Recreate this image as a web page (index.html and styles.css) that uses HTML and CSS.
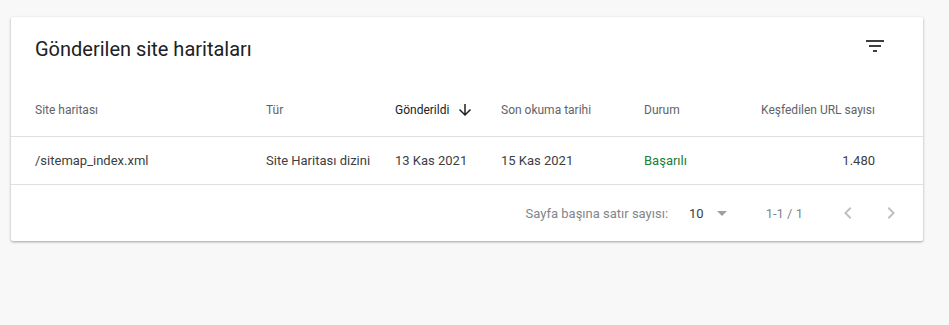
FILE: index.html
```html
<!DOCTYPE html>
<html lang="tr">
  <head>
    <meta charset="UTF-8" />
    <meta name="viewport" content="width=device-width, initial-scale=1.0" />
    <title>Site haritaları</title>
    <link rel="stylesheet" href="styles.css">
  </head>
  <body>
    <div id="card">
      <div class="card-head">
        <h2>Gönderilen site haritaları</h2>
        <button class="icon-btn" title="Filtrele">
          <svg width="24" height="24" viewBox="0 0 24 24"><path d="M3 6h18v2H3zM6 11h12v2H6zM10 16h4v2h-4z" fill="#3c4043"/></svg>
        </button>
      </div>

      <div class="row head-row">
        <span>Site haritası</span>
        <span>Tür</span>
        <span class="sorted">Gönderildi
          <svg width="18" height="18" viewBox="0 0 24 24"><path d="M20 12l-1.41-1.41L13 16.17V4h-2v12.17l-5.58-5.59L4 12l8 8 8-8z" fill="#202124"/></svg>
        </span>
        <span>Son okuma tarihi</span>
        <span>Durum</span>
        <span class="num">Keşfedilen URL sayısı</span>
      </div>

      <div class="row body-row">
        <span>/sitemap_index.xml</span>
        <span>Site Haritası dizini</span>
        <span>13 Kas 2021</span>
        <span>15 Kas 2021</span>
        <span class="ok">Başarılı</span>
        <span class="num">1.480</span>
      </div>

      <div class="pager">
        <span class="pager-label">Sayfa başına satır sayısı:</span>
        <span class="per-page">10
          <svg width="24" height="24" viewBox="0 0 24 24"><path d="M7 10l5 5 5-5z" fill="#9aa0a6"/></svg>
        </span>
        <span class="range">1-1 / 1</span>
        <svg class="nav" width="24" height="24" viewBox="0 0 24 24"><path d="M15.41 7.41L14 6l-6 6 6 6 1.41-1.41L10.83 12z" fill="#bdc1c6"/></svg>
        <svg class="nav" width="24" height="24" viewBox="0 0 24 24"><path d="M10 6L8.59 7.41 13.17 12l-4.58 4.59L10 18l6-6z" fill="#bdc1c6"/></svg>
      </div>
    </div>
  </body>
</html>
```

FILE: styles.css
```css
* {
  margin: 0;
  padding: 0;
  box-sizing: border-box;
}
html,
body {
  width: 100%;
  height: 100%;
}
body {
  background-color: #f8f8f8;
  font-family: Roboto, "Noto Sans", Arial, sans-serif;
  padding: 17px 26px 0 11px;
}
#card {
  width: 912px;
  background-color: #fff;
  border-radius: 2px;
  box-shadow: 0 1px 3px rgba(0, 0, 0, 0.25), 0 1px 2px rgba(0, 0, 0, 0.12);
}
.card-head {
  display: flex;
  align-items: center;
  justify-content: space-between;
  height: 63px;
  padding: 0 36px 0 24px;
}
.card-head h2 {
  font-size: 20px;
  font-weight: 400;
  color: #202124;
  padding-top: 1px;
}
.icon-btn {
  border: none;
  background: none;
  width: 24px;
  height: 24px;
  margin-top: -6px;
  cursor: pointer;
}
.row {
  display: grid;
  grid-template-columns: 231px 129px 106px 143px 1fr 120px;
  align-items: center;
  padding: 0 48px 0 24px;
}
.head-row {
  height: 57px;
  padding-top: 4px;
  font-size: 12px;
  color: #5f6368;
  border-bottom: 1px solid #e0e0e0;
}
.head-row .sorted {
  display: flex;
  align-items: center;
  gap: 7px;
  color: #202124;
}
.body-row {
  height: 48px;
  font-size: 13px;
  color: #3c4043;
  border-bottom: 1px solid #e0e0e0;
}
.num {
  text-align: right;
}
.ok {
  color: #188038;
}
.pager {
  display: flex;
  align-items: center;
  justify-content: flex-end;
  height: 56px;
  padding: 0 20px 0 24px;
  font-size: 13px;
  color: #80868b;
}
.pager-label {
  margin-right: 21px;
}
.per-page {
  display: flex;
  align-items: center;
  gap: 6px;
  color: #3c4043;
  margin-right: 32px;
}
.range {
  margin-right: 14px;
}
.nav {
  margin-left: 19px;
}
```
